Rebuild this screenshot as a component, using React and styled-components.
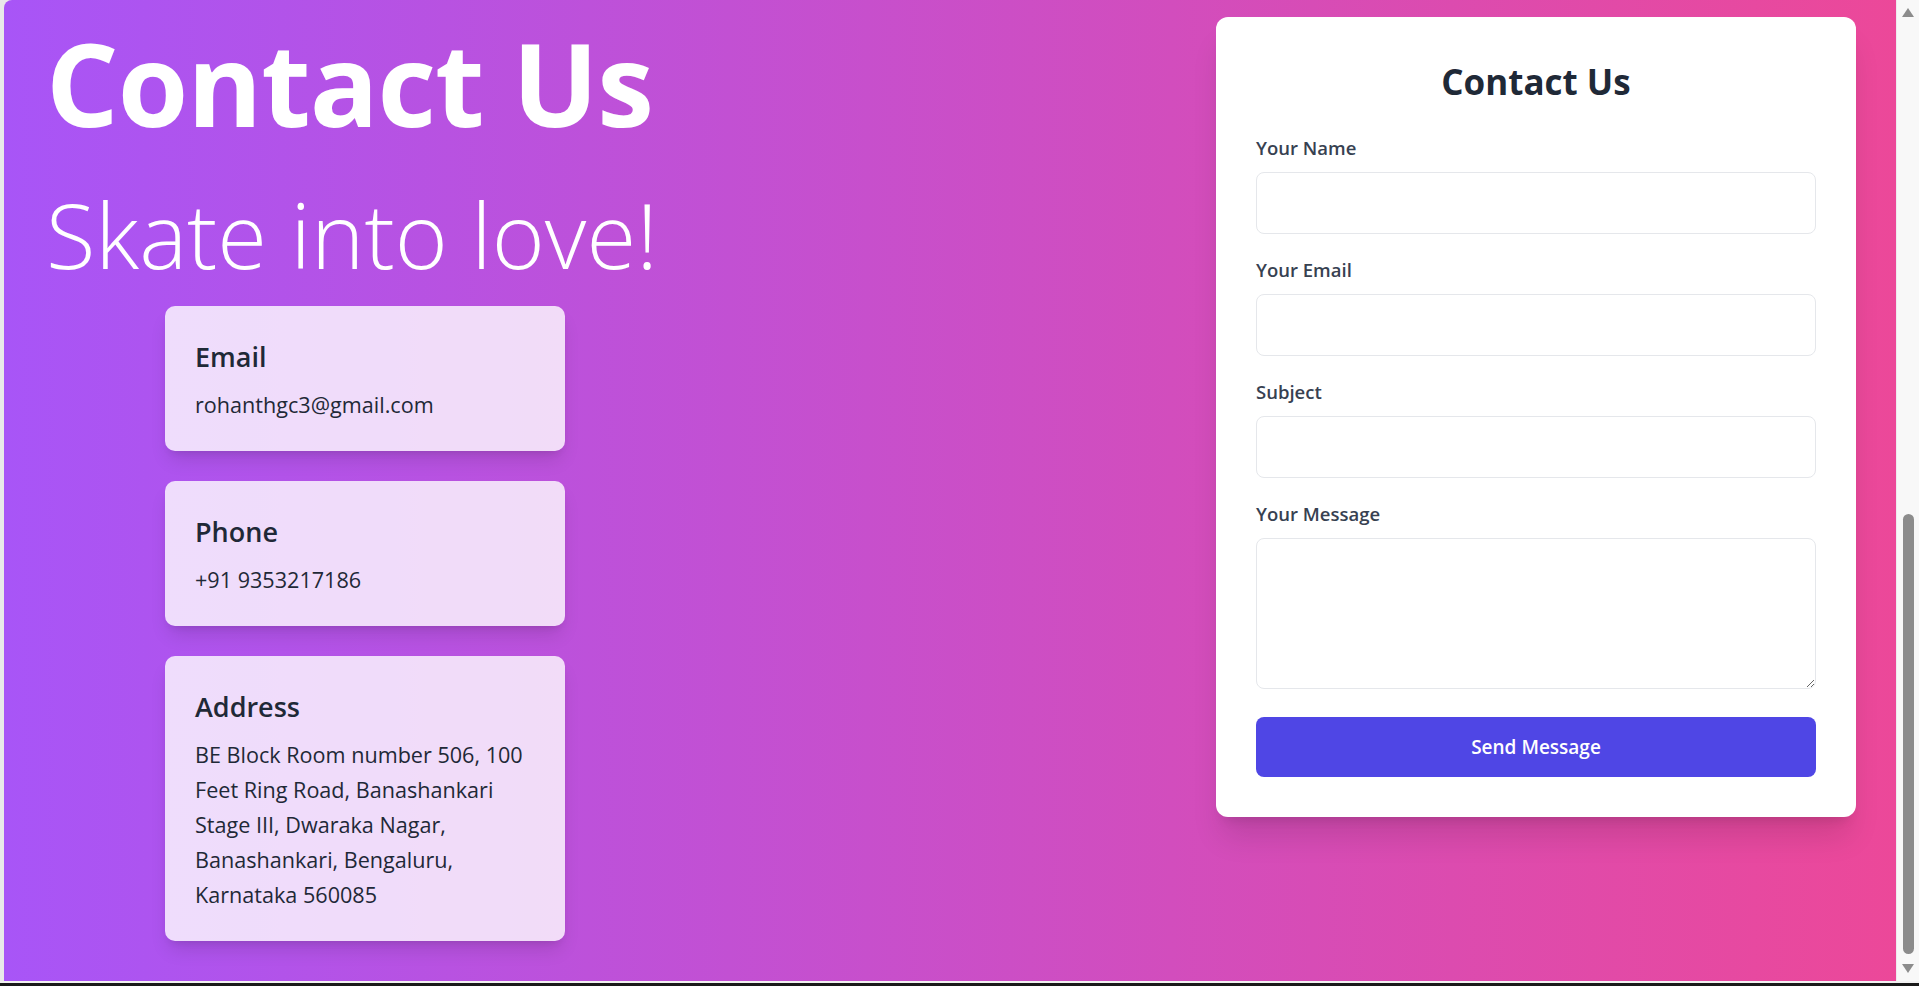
import React from 'react';
import styled, { createGlobalStyle } from 'styled-components';

const GlobalStyle = createGlobalStyle`
  html, body {
    margin: 0;
    padding: 0;
    height: 100%;
    overflow: hidden;
    background: #e9e9e9;
  }
  * {
    box-sizing: border-box;
  }
  #root {
    height: 100%;
  }
`;

const Window = styled.div`
  display: flex;
  flex-direction: column;
  height: 100vh;
  font-family: "Open Sans", "Noto Sans", sans-serif;
`;

const Viewport = styled.div`
  flex: 1;
  display: flex;
  min-height: 0;
  padding-left: 4px;
`;

const BottomEdge = styled.div`
  height: 5px;
  background: #f2f2f2;
  border-bottom: 3px solid #1a1a1a;
`;

const Section = styled.main`
  flex: 1;
  display: flex;
  justify-content: space-between;
  align-items: flex-start;
  padding: 17px 40px 0 42px;
  border-top-left-radius: 8px;
  background: linear-gradient(to right, #a855f7, #ec4899);
  overflow: hidden;
`;

const Intro = styled.div`
  display: flex;
  flex-direction: column;
  padding-top: 9px;
`;

const Title = styled.h1`
  margin: 0;
  font-size: 114px;
  line-height: 1;
  font-weight: 700;
  letter-spacing: -1px;
  color: #fff;
`;

const Tagline = styled.h2`
  margin: 49px 0 0;
  font-size: 90.5px;
  line-height: 1;
  font-weight: 300;
  color: #fff;
`;

const InfoList = styled.div`
  display: flex;
  flex-direction: column;
  gap: 30px;
  margin: 26px 0 0 119px;
`;

const InfoCard = styled.div`
  width: 400px;
  padding: 31px 30px 29px;
  border-radius: 10px;
  background: rgba(255, 255, 255, 0.8);
  box-shadow: 0 12px 19px -4px rgba(0, 0, 0, 0.12), 0 5px 8px -5px rgba(0, 0, 0, 0.12);
`;

const InfoTitle = styled.h3`
  margin: 0 0 10px;
  font-size: 27px;
  line-height: 40px;
  font-weight: 600;
  color: #1f2937;
`;

const InfoText = styled.p`
  margin: 0;
  font-size: 21.6px;
  line-height: 35px;
  color: #1f2937;
`;

const FormCard = styled.form`
  width: 640px;
  padding: 40px;
  border-radius: 12px;
  background: #fff;
  box-shadow: 0 25px 31px -6px rgba(0, 0, 0, 0.12), 0 10px 12px -8px rgba(0, 0, 0, 0.12);
  display: flex;
  flex-direction: column;
`;

const FormTitle = styled.h2`
  margin: 2px 0 28px;
  text-align: center;
  font-size: 35px;
  line-height: 45px;
  font-weight: 700;
  color: #1f2937;
`;

const Fields = styled.div`
  display: flex;
  flex-direction: column;
  gap: 20px;
`;

const Field = styled.label`
  display: flex;
  flex-direction: column;
  gap: 10px;
`;

const LabelText = styled.span`
  font-size: 18.5px;
  line-height: 30px;
  font-weight: 600;
  color: #374151;
  padding-top: 1px;
  margin-bottom: -1px;
`;

const Input = styled.input`
  width: 100%;
  height: 62px;
  padding: 15px 20px;
  border: 1px solid #e5e7eb;
  border-radius: 8px;
  font: inherit;
  font-size: 20px;
  background: #fff;
  outline: none;
`;

const TextArea = styled.textarea`
  width: 100%;
  height: 151px;
  padding: 15px 20px;
  border: 1px solid #e5e7eb;
  border-radius: 8px;
  font: inherit;
  font-size: 20px;
  background: #fff;
  resize: vertical;
  outline: none;
  display: block;
`;

const SendButton = styled.button`
  margin-top: 28px;
  height: 60px;
  border: none;
  border-radius: 8px;
  background: #4f46e5;
  color: #fff;
  font-family: inherit;
  font-size: 19px;
  font-weight: 600;
  cursor: pointer;
`;

const Scrollbar = styled.div`
  width: 23px;
  display: flex;
  flex-direction: column;
  align-items: center;
  background: #f8f8f8;
  border-left: 1px solid #ececec;
  padding: 8px 0;
`;

const Arrow = styled.svg`
  width: 12px;
  height: 9px;
  fill: #8c8c8c;
  flex: none;
`;

const Track = styled.div`
  flex: 1;
  width: 100%;
  display: flex;
  flex-direction: column;
  align-items: center;
  justify-content: flex-end;
  padding: 8px 0 10px;
`;

const Thumb = styled.div`
  width: 11px;
  height: 440px;
  border-radius: 6px;
  background: #8c8c8c;
`;

const info = [
  { title: 'Email', text: 'rohanthgc3@gmail.com' },
  { title: 'Phone', text: '+91 9353217186' },
  {
    title: 'Address',
    text: 'BE Block Room number 506, 100 Feet Ring Road, Banashankari Stage III, Dwaraka Nagar, Banashankari, Bengaluru, Karnataka 560085',
  },
];

const fields = [
  { label: 'Your Name', type: 'text' },
  { label: 'Your Email', type: 'email' },
  { label: 'Subject', type: 'text' },
];

export default function App() {
  return (
    <>
      <GlobalStyle />
      <Window>
        <Viewport>
          <Section>
            <Intro>
              <Title>Contact Us</Title>
              <Tagline>Skate into love!</Tagline>
              <InfoList>
                {info.map(item => (
                  <InfoCard key={item.title}>
                    <InfoTitle>{item.title}</InfoTitle>
                    <InfoText>{item.text}</InfoText>
                  </InfoCard>
                ))}
              </InfoList>
            </Intro>
            <FormCard onSubmit={e => e.preventDefault()}>
              <FormTitle>Contact Us</FormTitle>
              <Fields>
                {fields.map(f => (
                  <Field key={f.label}>
                    <LabelText>{f.label}</LabelText>
                    <Input type={f.type} />
                  </Field>
                ))}
                <Field>
                  <LabelText>Your Message</LabelText>
                  <TextArea rows={4} />
                </Field>
              </Fields>
              <SendButton type="submit">Send Message</SendButton>
            </FormCard>
          </Section>
          <Scrollbar>
            <Arrow viewBox="0 0 12 9"><path d="M6 0 L12 9 L0 9 Z" /></Arrow>
            <Track>
              <Thumb />
            </Track>
            <Arrow viewBox="0 0 12 9"><path d="M0 0 L12 0 L6 9 Z" /></Arrow>
          </Scrollbar>
        </Viewport>
        <BottomEdge />
      </Window>
    </>
  );
}
